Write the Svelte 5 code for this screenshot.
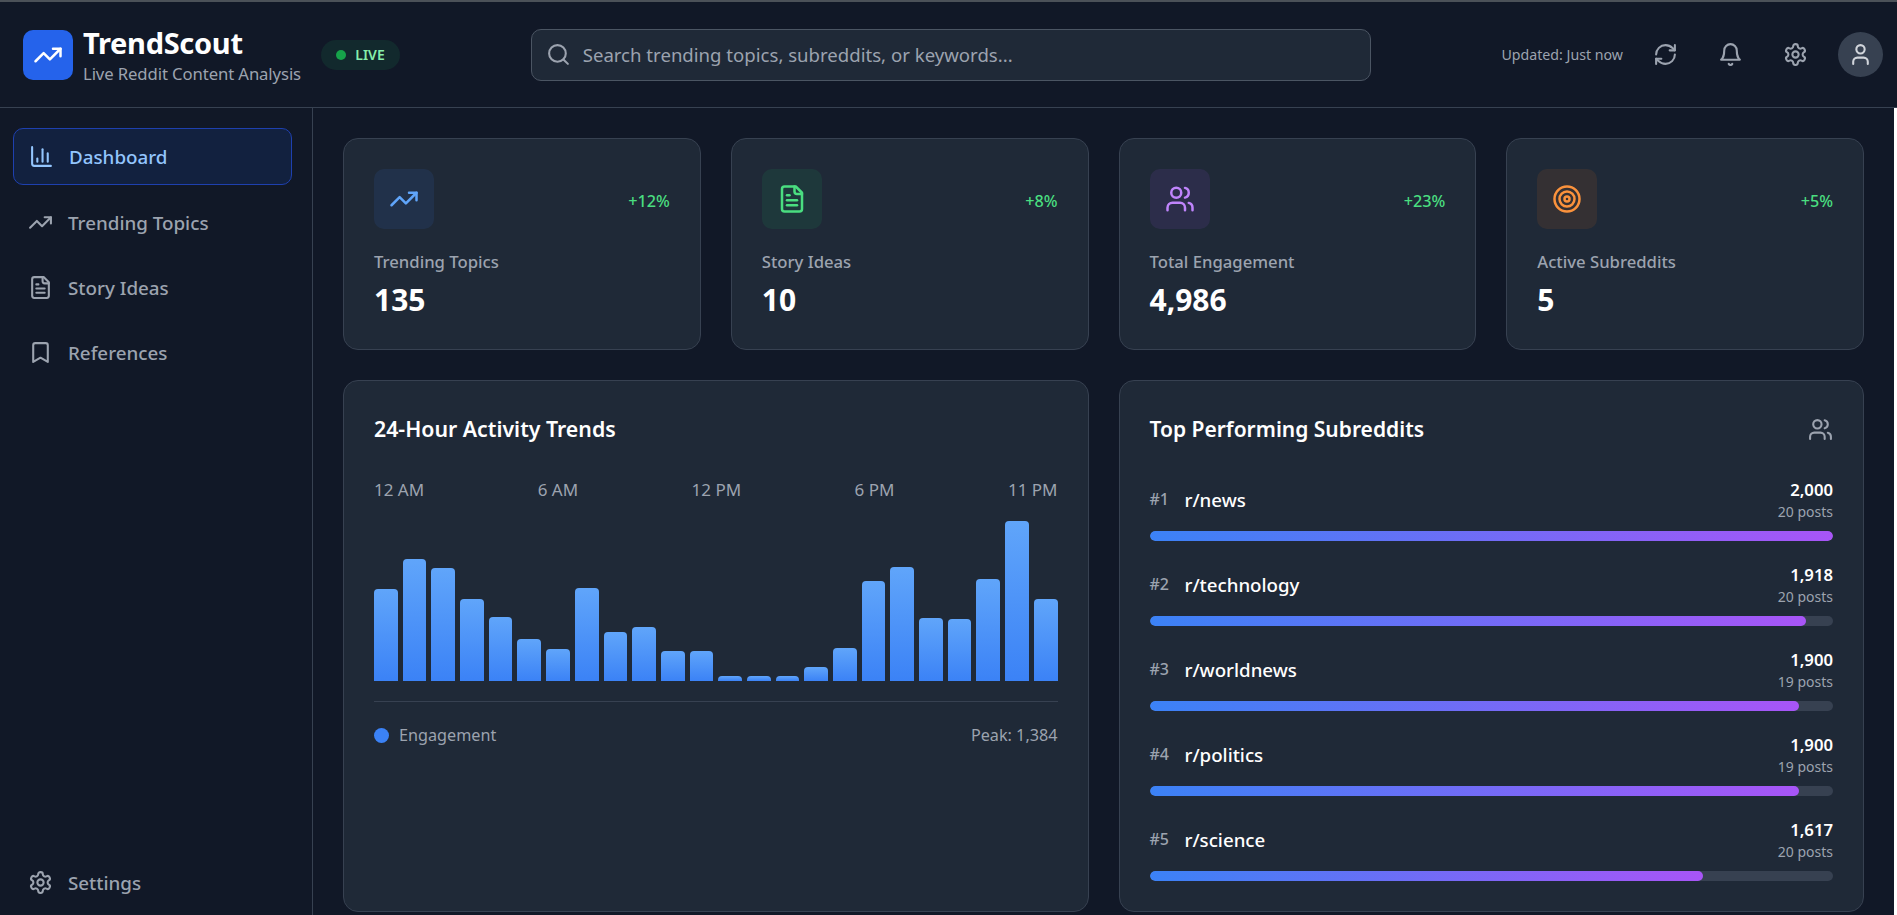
<script>
  const bars = [92,122,113,82,64,42,32,93,49,54,30,30,5,5,5,14,33,100,114,63,62,102,160,82];
  const hours = ['12 AM','6 AM','12 PM','6 PM','11 PM'];
  const stats = [
    { key:'trend', tone:'blue', change:'+12%', label:'Trending Topics', value:'135' },
    { key:'file', tone:'green', change:'+8%', label:'Story Ideas', value:'10' },
    { key:'users', tone:'purple', change:'+23%', label:'Total Engagement', value:'4,986' },
    { key:'target', tone:'orange', change:'+5%', label:'Active Subreddits', value:'5' }
  ];
  const subs = [
    { rank:1, name:'r/news', count:'2,000', posts:'20 posts', pct:100 },
    { rank:2, name:'r/technology', count:'1,918', posts:'20 posts', pct:96 },
    { rank:3, name:'r/worldnews', count:'1,900', posts:'19 posts', pct:95 },
    { rank:4, name:'r/politics', count:'1,900', posts:'19 posts', pct:95 },
    { rank:5, name:'r/science', count:'1,617', posts:'20 posts', pct:81 }
  ];
  const nav = [
    { key:'chart', label:'Dashboard', active:true },
    { key:'trend', label:'Trending Topics' },
    { key:'file', label:'Story Ideas' },
    { key:'bookmark', label:'References' }
  ];
</script>

{#snippet icon(name)}
  <svg class="ico" viewBox="0 0 24 24" fill="none" stroke="currentColor" stroke-width="2" stroke-linecap="round" stroke-linejoin="round">
    {#if name === 'trend'}
      <polyline points="22 7 13.5 15.5 8.5 10.5 2 17"/><polyline points="16 7 22 7 22 13"/>
    {:else if name === 'chart'}
      <path d="M3 3v16a2 2 0 0 0 2 2h16"/><path d="M18 17V9"/><path d="M13 17V5"/><path d="M8 17v-3"/>
    {:else if name === 'file'}
      <path d="M15 2H6a2 2 0 0 0-2 2v16a2 2 0 0 0 2 2h12a2 2 0 0 0 2-2V7Z"/><path d="M14 2v4a2 2 0 0 0 2 2h4"/><path d="M10 9H8"/><path d="M16 13H8"/><path d="M16 17H8"/>
    {:else if name === 'bookmark'}
      <path d="m19 21-7-4-7 4V5a2 2 0 0 1 2-2h10a2 2 0 0 1 2 2v16z"/>
    {:else if name === 'settings'}
      <path d="M12.22 2h-.44a2 2 0 0 0-2 2v.18a2 2 0 0 1-1 1.73l-.43.25a2 2 0 0 1-2 0l-.15-.08a2 2 0 0 0-2.73.73l-.22.38a2 2 0 0 0 .73 2.73l.15.1a2 2 0 0 1 1 1.72v.51a2 2 0 0 1-1 1.74l-.15.09a2 2 0 0 0-.73 2.73l.22.38a2 2 0 0 0 2.73.73l.15-.08a2 2 0 0 1 2 0l.43.25a2 2 0 0 1 1 1.73V20a2 2 0 0 0 2 2h.44a2 2 0 0 0 2-2v-.18a2 2 0 0 1 1-1.73l.43-.25a2 2 0 0 1 2 0l.15.08a2 2 0 0 0 2.73-.73l.22-.39a2 2 0 0 0-.73-2.73l-.15-.08a2 2 0 0 1-1-1.74v-.5a2 2 0 0 1 1-1.74l.15-.09a2 2 0 0 0 .73-2.73l-.22-.38a2 2 0 0 0-2.73-.73l-.15.08a2 2 0 0 1-2 0l-.43-.25a2 2 0 0 1-1-1.73V4a2 2 0 0 0-2-2z"/><circle cx="12" cy="12" r="3"/>
    {:else if name === 'refresh'}
      <path d="M3 12a9 9 0 0 1 9-9 9.75 9.75 0 0 1 6.74 2.74L21 8"/><path d="M21 3v5h-5"/><path d="M21 12a9 9 0 0 1-9 9 9.75 9.75 0 0 1-6.74-2.74L3 16"/><path d="M8 16H3v5"/>
    {:else if name === 'bell'}
      <path d="M6 8a6 6 0 0 1 12 0c0 7 3 9 3 9H3s3-2 3-9"/><path d="M10.3 21a1.94 1.94 0 0 0 3.4 0"/>
    {:else if name === 'user'}
      <path d="M19 21v-2a4 4 0 0 0-4-4H9a4 4 0 0 0-4 4v2"/><circle cx="12" cy="7" r="4"/>
    {:else if name === 'users'}
      <path d="M16 21v-2a4 4 0 0 0-4-4H6a4 4 0 0 0-4 4v2"/><circle cx="9" cy="7" r="4"/><path d="M22 21v-2a4 4 0 0 0-3-3.87"/><path d="M16 3.13a4 4 0 0 1 0 7.75"/>
    {:else if name === 'target'}
      <circle cx="12" cy="12" r="10"/><circle cx="12" cy="12" r="6"/><circle cx="12" cy="12" r="2"/>
    {:else if name === 'search'}
      <circle cx="11" cy="11" r="8"/><path d="m21 21-4.3-4.3"/>
    {/if}
  </svg>
{/snippet}

<div class="page">
  <header class="topbar">
    <div class="brand">
      <div class="logo">{@render icon('trend')}</div>
      <div class="brand-text">
        <div class="name">TrendScout</div>
        <div class="tag">Live Reddit Content Analysis</div>
      </div>
      <div class="live"><span class="dot"></span>LIVE</div>
    </div>
    <div class="search">
      {@render icon('search')}
      <span>Search trending topics, subreddits, or keywords...</span>
    </div>
    <div class="tools">
      <span class="updated">Updated: Just now</span>
      <button class="tool">{@render icon('refresh')}</button>
      <button class="tool">{@render icon('bell')}</button>
      <button class="tool">{@render icon('settings')}</button>
      <button class="avatar">{@render icon('user')}</button>
    </div>
  </header>

  <div class="body">
    <aside class="side">
      <nav class="nav">
        {#each nav as n}
          <div class="item" class:active={n.active}>{@render icon(n.key)}<span>{n.label}</span></div>
        {/each}
      </nav>
      <div class="item">{@render icon('settings')}<span>Settings</span></div>
    </aside>

    <main class="main">
      <section class="stats">
        {#each stats as s}
          <div class="card stat">
            <div class="stat-top">
              <div class="stat-ico {s.tone}">{@render icon(s.key)}</div>
              <span class="change">{s.change}</span>
            </div>
            <div class="stat-label">{s.label}</div>
            <div class="stat-value">{s.value}</div>
          </div>
        {/each}
      </section>

      <section class="panels">
        <div class="card panel">
          <h2>24-Hour Activity Trends</h2>
          <div class="hours">{#each hours as h}<span>{h}</span>{/each}</div>
          <div class="bars">
            {#each bars as b}<div class="bar" style="height:{b}px"></div>{/each}
          </div>
          <div class="legend">
            <span class="key"><i></i>Engagement</span>
            <span>Peak: 1,384</span>
          </div>
        </div>

        <div class="card panel">
          <div class="panel-head">
            <h2>Top Performing Subreddits</h2>
            {@render icon('users')}
          </div>
          <div class="subs">
            {#each subs as r}
              <div class="sub">
                <div class="sub-row">
                  <div class="sub-left"><span class="rank">#{r.rank}</span><span class="sub-name">{r.name}</span></div>
                  <div class="sub-right"><div class="count">{r.count}</div><div class="posts">{r.posts}</div></div>
                </div>
                <div class="track"><div class="fill" style="width:{r.pct}%"></div></div>
              </div>
            {/each}
          </div>
        </div>
      </section>
    </main>
  </div>
</div>

<style>
  :global(body) { margin: 0; background: #fff; overflow: hidden; }
  .page {
    height: 915px; overflow: hidden; display: flex; flex-direction: column;
    font-family: "Noto Sans", "Open Sans", sans-serif; color: #fff;
  }
  .ico { width: 25px; height: 25px; display: block; flex: none; }

  .topbar {
    height: 105px; flex: none;
    border-top: 2px solid #4b5158; border-bottom: 1px solid #374151;
    background: #111827; display: flex; align-items: center; justify-content: space-between;
    padding: 0 14px 0 23px;
  }
  .brand { display: flex; align-items: center; }
  .logo {
    width: 50px; height: 50px; border-radius: 10px; background: #2563eb;
    display: flex; align-items: center; justify-content: center; color: #fff; margin-right: 10px;
  }
  .logo .ico { width: 30px; height: 30px; }
  .name { font-size: 29px; font-weight: 700; line-height: 34px; letter-spacing: -.3px; margin-top: -2px; }
  .tag { font-size: 16.7px; line-height: 22px; color: #9ca3af; letter-spacing: -.1px; margin: 3px 0 -3px; }
  .live {
    margin-left: 20px; height: 30px; width: 79px; box-sizing: border-box; border-radius: 15px;
    background: rgba(34,197,94,.1); display: flex; align-items: center; justify-content: center; gap: 9px;
    font-size: 14px; font-weight: 600; color: #86efac;
  }
  .dot { width: 10px; height: 10px; border-radius: 50%; background: #16a34a; }

  .search {
    width: 840px; height: 52px; box-sizing: border-box; border: 1px solid #4b5563; border-radius: 10px;
    background: #1f2937; display: flex; align-items: center; gap: 12px; padding: 0 14px; color: #9ca3af;
    font-size: 18.6px;
  }
  .tools { display: flex; align-items: center; gap: 20px; }
  .updated { font-size: 14.2px; color: #9ca3af; }
  .tool, .avatar {
    width: 45px; height: 45px; padding: 10px; border: 0; background: none; color: #9ca3af;
    display: flex; align-items: center; justify-content: center; box-sizing: border-box;
  }
  .avatar { background: #374151; border-radius: 50%; color: #d1d5db; }

  .body { flex: 1; min-height: 0; display: flex; margin-right: 3px; }
  .side {
    width: 279px; flex: none; border-right: 1px solid #374151; background: #111827;
    padding: 20px 20px 5px 13px; display: flex; flex-direction: column; justify-content: space-between;
  }
  .nav { display: flex; flex-direction: column; gap: 10px; }
  .item {
    height: 55px; box-sizing: border-box; display: flex; align-items: center; gap: 15px; padding: 0 15px; color: #9ca3af;
    font-size: 18.8px; font-weight: 500;
  }
  .item.active {
    height: 57px; color: #93c5fd; background: rgba(37,99,235,.12); border: 1px solid #1e40af; border-radius: 10px;
  }

  .main { flex: 1; min-width: 0; overflow: hidden; background: #111827; padding: 30px 30px 0; box-sizing: border-box; display: flex; flex-direction: column; gap: 30px; }
  .card { background: #1f2937; border: 1px solid #374151; border-radius: 15px; box-sizing: border-box; }
  .stats { flex: none; display: grid; grid-template-columns: repeat(4, 1fr); gap: 30px; }
  .stat { height: 212px; padding: 30px; }
  .stat-top { display: flex; align-items: center; justify-content: space-between; height: 60px; }
  .stat-ico { width: 60px; height: 60px; border-radius: 10px; display: flex; align-items: center; justify-content: center; }
  .stat-ico .ico { width: 30px; height: 30px; }
  .blue { background: rgba(59,130,246,.1); color: #60a5fa; }
  .green { background: rgba(34,197,94,.1); color: #4ade80; }
  .purple { background: rgba(168,85,247,.1); color: #c084fc; }
  .orange { background: rgba(249,115,22,.1); color: #fb923c; }
  .change { font-size: 16.2px; color: #4ade80; font-weight: 500; position: relative; top: 2px; }
  .stat-label { margin-top: 20px; font-size: 16.7px; line-height: 25px; color: #9ca3af; font-weight: 500; }
  .stat-value { margin-top: 6px; font-size: 30px; line-height: 40px; font-weight: 700; }

  .panels { flex: none; display: grid; grid-template-columns: repeat(2, 1fr); gap: 30px; height: 532px; }
  .panel { padding: 30px; }
  h2 { margin: 0; font-size: 21.3px; line-height: 36px; font-weight: 600; }
  .hours { display: flex; justify-content: space-between; margin-top: 30px; font-size: 17px; line-height: 25px; color: #9ca3af; }
  .bars { margin-top: 19px; height: 160px; display: flex; align-items: flex-end; gap: 5px; }
  .bar { flex: 1; border-radius: 4px 4px 0 0; background: linear-gradient(to top, #3b82f6, #60a5fa); }
  .legend {
    margin-top: 20px; padding-top: 21px; border-top: 1px solid #374151;
    display: flex; align-items: center; justify-content: space-between; font-size: 16.2px; line-height: 25px; color: #9ca3af;
  }
  .key { display: flex; align-items: center; gap: 10px; }
  .key i { width: 15px; height: 15px; border-radius: 50%; background: #3b82f6; }
  .panel-head { display: flex; align-items: center; justify-content: space-between; color: #9ca3af; }
  .panel-head h2 { color: #fff; font-size: 21px; }
  .subs { margin-top: 31px; display: flex; flex-direction: column; gap: 22px; }
  .sub-row { display: flex; justify-content: space-between; align-items: flex-start; height: 45px; }
  .sub-left { display: flex; align-items: center; gap: 15px; height: 43px; }
  .rank { min-width: 20px; font-size: 16px; color: #9ca3af; font-weight: 500; position: relative; top: -1px; }
  .sub-name { font-size: 18.7px; font-weight: 500; color: #fff; }
  .sub-right { text-align: right; }
  .count { font-size: 16.7px; line-height: 24px; font-weight: 600; }
  .posts { font-size: 14px; line-height: 20px; color: #9ca3af; }
  .track { margin-top: 8px; height: 10px; border-radius: 5px; background: #374151; overflow: hidden; }
  .fill { height: 100%; border-radius: 5px; background: linear-gradient(to right, #3b82f6, #a855f7); }
</style>
